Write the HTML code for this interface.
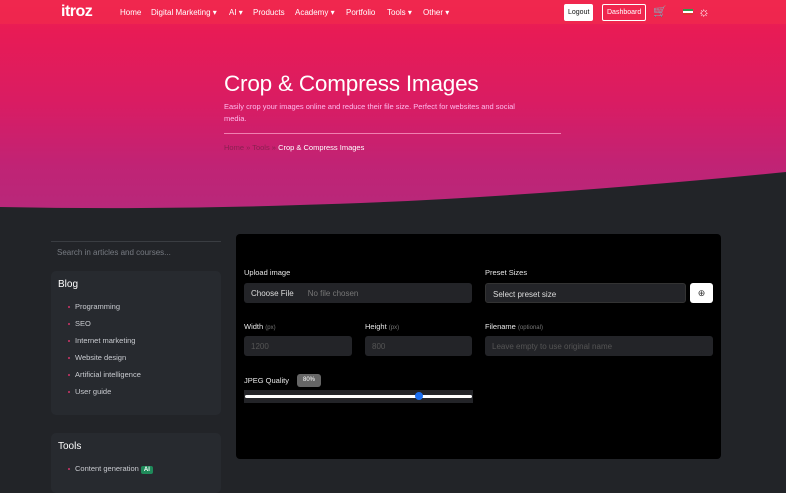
<!DOCTYPE html>
<html><head><meta charset="utf-8"><style>
*{box-sizing:border-box;margin:0;padding:0}
body{width:786px;height:473px;overflow:hidden;background:#222428;font-family:"Liberation Sans",sans-serif;color:#fff;position:relative}
.hero{position:absolute;left:0;top:0;width:786px;height:215px}
.nav{position:absolute;top:0;left:0;width:786px;height:24px;font-size:8px;color:#fff}
.nav span{position:absolute;top:8px}
.logo{position:absolute;left:61px;top:3px;font-size:16px;font-weight:bold;letter-spacing:-0.5px}
.btn{position:absolute;top:4px;height:17px;font-size:7px;padding:0 4px;border-radius:2px;display:flex;align-items:center}
h1{position:absolute;left:224px;top:71px;font-size:22.5px;font-weight:normal;letter-spacing:-0.2px}
.sub{position:absolute;left:224px;top:101px;font-size:7.5px;line-height:12px;width:340px;color:#fbe}
.hr{position:absolute;left:224px;top:133px;width:337px;height:1px;background:#f07fb0}
.bc{position:absolute;left:224px;top:143px;font-size:7.5px}
.search{position:absolute;left:51px;top:241px;width:170px;height:24px;border-top:1px solid #3a3d42;font-size:8px;color:#777b82;padding:6px 6px}
.card{position:absolute;left:51px;width:170px;background:#272a2f;border-radius:5px}
.card h3{font-size:10px;font-weight:normal;position:absolute;left:7px}
.card li{list-style:none;position:absolute;left:24px;font-size:7.5px;color:#c9cbd0}
.card li:before{content:"";position:absolute;left:-7px;top:4px;width:2px;height:2px;background:#d0356a;border-radius:1px}
.panel{position:absolute;left:236px;top:234px;width:485px;height:225px;background:#000;border-radius:4px}
.lab{position:absolute;font-size:7.5px;color:#e8e8e8}
.lab i{font-style:normal;font-size:6px;color:#777}
.inp{position:absolute;background:#232428;border-radius:3px;height:20px;font-size:8px;color:#555;padding:6px 7px}
</style></head><body>
<svg class="hero" viewBox="0 0 786 215" preserveAspectRatio="none">
<defs><linearGradient id="g" x1="0" y1="0" x2="0" y2="1">
<stop offset="0" stop-color="#ef2550"/><stop offset="0.15" stop-color="#e81b55"/><stop offset="0.5" stop-color="#d91c63"/><stop offset="0.8" stop-color="#c02375"/><stop offset="1" stop-color="#b8287a"/></linearGradient></defs>
<path d="M0 0H786V172Q500 200 300 205Q150 210 0 207Z" fill="url(#g)"/>
<path d="M0 0H786V24H0Z" fill="#f0284e" opacity="0.8"/>
</svg>
<div class="nav">
<div class="logo">itroz</div>
<span style="left:120px">Home</span><span style="left:151px">Digital Marketing ▾</span><span style="left:229px">AI ▾</span><span style="left:253px">Products</span><span style="left:295px">Academy ▾</span><span style="left:346px">Portfolio</span><span style="left:387px">Tools ▾</span><span style="left:423px">Other ▾</span>
<div class="btn" style="left:564px;background:#fff;color:#111">Logout</div>
<div class="btn" style="left:602px;border:1px solid #fff;color:#fff">Dashboard</div>
<span style="left:653px;top:5px;font-size:11px">🛒</span>
<div style="position:absolute;left:683px;top:9px;width:10px;height:6px;background:linear-gradient(#2a9b4a 33%,#fff 33% 66%,#d33 66%)"></div>
<span style="left:698px;top:4px;font-size:13px">☼</span>
</div>
<h1>Crop &amp; Compress Images</h1>
<div class="sub">Easily crop your images online and reduce their file size. Perfect for websites and social<br>media.</div>
<div class="hr"></div>
<div class="bc"><span style="color:#8a2050">Home » Tools »</span> Crop &amp; Compress Images</div>

<div class="search">Search in articles and courses...</div>
<div class="card" style="top:271px;height:144px">
<h3 style="top:8px">Blog</h3>
<li style="top:31px">Programming</li><li style="top:48px">SEO</li><li style="top:65px">Internet marketing</li><li style="top:82px">Website design</li><li style="top:99px">Artificial intelligence</li><li style="top:116px">User guide</li>
</div>
<div class="card" style="top:433px;height:60px">
<h3 style="top:8px">Tools</h3>
<li style="top:31px">Content generation <b style="background:#1f8a5a;color:#fff;font-size:6px;padding:1px 3px;border-radius:2px">AI</b></li>
</div>

<div class="panel"></div>
<div class="lab" style="left:244px;top:268px">Upload image</div>
<div class="inp" style="left:244px;top:283px;width:228px;color:#777"><span style="color:#ddd;margin-right:14px">Choose File</span>No file chosen</div>
<div class="lab" style="left:485px;top:268px">Preset Sizes</div>
<div class="inp" style="left:485px;top:283px;width:201px;border:1px solid #333;color:#ddd">Select preset size</div>
<div style="position:absolute;left:690px;top:283px;width:23px;height:20px;background:#fff;border-radius:3px;color:#333;font-size:9px;text-align:center;line-height:20px">⊕</div>
<div class="lab" style="left:244px;top:322px">Width <i>(px)</i></div>
<div class="inp" style="left:244px;top:336px;width:108px">1200</div>
<div class="lab" style="left:365px;top:322px">Height <i>(px)</i></div>
<div class="inp" style="left:365px;top:336px;width:107px">800</div>
<div class="lab" style="left:485px;top:322px">Filename <i>(optional)</i></div>
<div class="inp" style="left:485px;top:336px;width:228px">Leave empty to use original name</div>
<div class="lab" style="left:244px;top:376px">JPEG Quality</div>
<div style="position:absolute;left:297px;top:374px;width:24px;height:13px;background:#666;border-radius:3px;font-size:6px;line-height:13px;text-align:center">80%</div>
<div style="position:absolute;left:244px;top:390px;width:229px;height:13px;background:#232428"></div>
<div style="position:absolute;left:245px;top:395px;width:227px;height:3px;background:#fff;border-radius:2px"></div>
<div style="position:absolute;left:415px;top:392px;width:8px;height:8px;background:#1a6ef0;border-radius:50%"></div>
</body></html>
